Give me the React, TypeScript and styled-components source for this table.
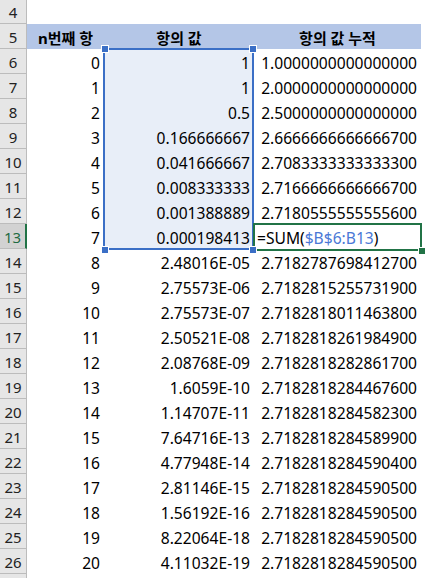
import React from "react";
import styled, { createGlobalStyle } from "styled-components";

const Global = createGlobalStyle`
  html, body { margin: 0; padding: 0; background: #fff; }
  body { font-family: "Noto Sans", "Noto Sans CJK KR", sans-serif; overflow: hidden; }
`;

const COLS = "27px 77px 150px 167px 1fr";

const Sheet = styled.div`
  position: relative;
  width: 436px;
  height: 578px;
  overflow: hidden;
  background: #fff;
`;

const Row = styled.div<{ $h: number }>`
  display: grid;
  grid-template-columns: ${COLS};
  height: ${(p) => p.$h}px;
`;

const RowHead = styled.div<{ $active?: boolean }>`
  box-sizing: border-box;
  background: ${(p) => (p.$active ? "#d2d2d2" : "#e6e6e6")};
  color: ${(p) => (p.$active ? "#1e6b42" : "#222")};
  border-bottom: 1px solid #bcbcbc;
  border-right: ${(p) => (p.$active ? "2px solid #217346" : "1px solid #bcbcbc")};
  display: flex;
  align-items: center;
  justify-content: center;
  font-size: 15px;
  padding-top: 1px;
`;

const Cell = styled.div<{ $align?: "left" | "right" | "center"; $fill?: string; $bold?: boolean }>`
  box-sizing: border-box;
  display: flex;
  align-items: center;
  justify-content: ${(p) =>
    p.$align === "left" ? "flex-start" : p.$align === "center" ? "center" : "flex-end"};
  padding: ${(p) => (p.$align === "left" ? "2px 0 0 3px" : p.$align === "center" ? "1px 0 0 0" : "2px 4px 0 0")};
  background: ${(p) => p.$fill || "transparent"};
  font-size: ${(p) => (p.$bold ? "15px" : "15.6px")};
  font-weight: ${(p) => (p.$bold ? 700 : 400)};
  color: #000;
  white-space: nowrap;
  overflow: hidden;
`;

const Ref = styled.span`
  color: #4a78d6;
`;

const RangeBox = styled.div`
  position: absolute;
  left: 103px;
  top: 48px;
  width: 151px;
  height: 202px;
  box-sizing: border-box;
  border: 2px solid #3b6fc6;
  pointer-events: none;
`;

const Handle = styled.div<{ $x: number; $y: number; $color: string }>`
  position: absolute;
  left: ${(p) => p.$x}px;
  top: ${(p) => p.$y}px;
  width: 6px;
  height: 6px;
  background: ${(p) => p.$color};
  outline: 1px solid #fff;
`;

const ActiveBox = styled.div`
  position: absolute;
  left: 253px;
  top: 223px;
  width: 169px;
  height: 28px;
  box-sizing: border-box;
  border: 2px solid #217346;
  pointer-events: none;
`;

const SEL = "#e8eef8";
const HEAD = "#b4c6e7";

const data: [number, string, string][] = [
  [0, "1", "1.0000000000000000"],
  [1, "1", "2.0000000000000000"],
  [2, "0.5", "2.5000000000000000"],
  [3, "0.166666667", "2.6666666666666700"],
  [4, "0.041666667", "2.7083333333333300"],
  [5, "0.008333333", "2.7166666666666700"],
  [6, "0.001388889", "2.7180555555555600"],
  [7, "0.000198413", "FORMULA"],
  [8, "2.48016E-05", "2.7182787698412700"],
  [9, "2.75573E-06", "2.7182815255731900"],
  [10, "2.75573E-07", "2.7182818011463800"],
  [11, "2.50521E-08", "2.7182818261984900"],
  [12, "2.08768E-09", "2.7182818282861700"],
  [13, "1.6059E-10", "2.7182818284467600"],
  [14, "1.14707E-11", "2.7182818284582300"],
  [15, "7.64716E-13", "2.7182818284589900"],
  [16, "4.77948E-14", "2.7182818284590400"],
  [17, "2.81146E-15", "2.7182818284590500"],
  [18, "1.56192E-16", "2.7182818284590500"],
  [19, "8.22064E-18", "2.7182818284590500"],
  [20, "4.11032E-19", "2.7182818284590500"],
];

export default function App() {
  return (
    <>
      <Global />
      <Sheet>
        <Row $h={25} style={{ marginTop: -1 }}>
          <RowHead>4</RowHead>
          <Cell />
          <Cell />
          <Cell />
          <Cell />
        </Row>
        <Row $h={25}>
          <RowHead>5</RowHead>
          <Cell $align="center" $fill={HEAD} $bold>n번째 항</Cell>
          <Cell $align="center" $fill={HEAD} $bold>항의 값</Cell>
          <Cell $align="center" $fill={HEAD} $bold>항의 값 누적</Cell>
          <Cell />
        </Row>
        {data.map(([n, v, acc], i) => {
          const rowNum = i + 6;
          const sel = rowNum <= 13;
          return (
            <Row $h={25} key={rowNum}>
              <RowHead $active={rowNum === 13}>{rowNum}</RowHead>
              <Cell $align="right">{n}</Cell>
              <Cell $align="right" $fill={sel ? SEL : undefined}>{v}</Cell>
              {acc === "FORMULA" ? (
                <Cell $align="left">
                  =SUM(<Ref>$B$6:B13</Ref>)
                </Cell>
              ) : (
                <Cell $align="right">{acc}</Cell>
              )}
              <Cell />
            </Row>
          );
        })}
        <Row $h={25}>
          <RowHead />
          <Cell />
          <Cell />
          <Cell />
          <Cell />
        </Row>
        <RangeBox />
        <ActiveBox />
        <Handle $x={102} $y={46} $color="#3b6fc6" />
        <Handle $x={250} $y={46} $color="#3b6fc6" />
        <Handle $x={102} $y={247} $color="#3b6fc6" />
        <Handle $x={250} $y={247} $color="#3b6fc6" />
        <Handle $x={419} $y={248} $color="#217346" />
      </Sheet>
    </>
  );
}
